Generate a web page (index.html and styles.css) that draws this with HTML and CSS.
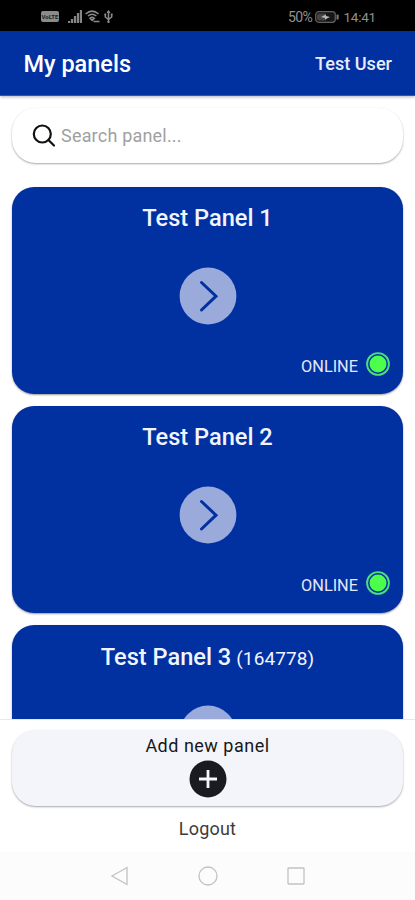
FILE: index.html
```html
<!DOCTYPE html>
<html lang="en">
<head>
<meta charset="utf-8">
<title>My panels</title>
<link rel="stylesheet" href="styles.css">
</head>
<body>
<div class="status">
  <div class="status-left">
    <span class="volte">VoLTE</span>
    <svg class="signal" width="14" height="13" viewBox="0 0 14 13"><path d="M1 13v-2M4 13V9M7 13V6M10 13V3M13 13V0" stroke="#858585" stroke-width="2.300"/></svg>
    <svg class="wifi" width="15" height="13" viewBox="0 0 15 13" fill="none" stroke="#8b8b8b" stroke-width="1.500"><path d="M.6 4Q7-1.800 13.600 4M3 6Q7 2.600 11.400 6M5 8.300Q7 6.500 9.300 8.300L7.200 10.500zM8.500 11.500h6"/></svg>
    <svg class="usb" width="9" height="13" viewBox="0 0 9 13" fill="none" stroke="#8b8b8b" stroke-width="1.500"><path d="M4.500 1v11M1.300 4v3l3.200 2.500L7.700 7V4"/><path d="M4.500 0 2.500 3h4zM3.500 11h2v2h-2zM.5 3.500h1.700v1.700H.5zM6.800 3.500h1.700v1.700H6.800z" fill="#8b8b8b" stroke="none"/></svg>
  </div>
  <div class="status-right">
    <span class="percent">50%</span>
    <svg class="battery" width="24" height="12" viewBox="0 0 24 12"><rect x=".7" y=".7" width="19.600" height="10.600" rx="3" fill="#161616" stroke="#626262" stroke-width="1.200"/><path d="M4 2.500h7v7H4a2 2 0 0 1-2-2v-3a2 2 0 0 1 2-2z" fill="#444"/><path d="M6 6l5-2.500V5l4 1-5 2.500V7z" fill="#bbb"/><path d="M21.500 3.500h1.200a1 1 0 0 1 1 1v3a1 1 0 0 1-1 1h-1.200z" fill="#777"/></svg>
    <span class="clock">14:41</span>
  </div>
</div>
<header class="header">
  <h1 class="title">My panels</h1>
  <span class="user">Test User</span>
</header>
<main class="content">
  <div class="search">
    <svg width="24" height="24" viewBox="0 0 24 24" fill="none" stroke="#111" stroke-width="2.200" stroke-linecap="round"><circle cx="10.300" cy="10" r="8.500"/><path d="M16.500 16l5.500 5.500"/></svg>
    <span class="placeholder">Search panel...</span>
  </div>
  <section class="panel">
    <h2 class="name">Test Panel 1</h2>
    <svg class="go" width="58" height="58" viewBox="0 0 58 58"><circle cx="29" cy="29" r="28.400" fill="#99aadb"/><path d="M22.500 15.500L37 29.200 22.500 43" fill="none" stroke="#0130a0" stroke-width="3" stroke-linecap="round"/></svg>
    <div class="state"><span>ONLINE</span><svg width="24" height="24" viewBox="0 0 24 24"><circle cx="12" cy="12" r="8.500" fill="#4dff4d"/><circle cx="12" cy="12" r="10.900" fill="none" stroke="#4ce07a" stroke-width="1.900"/></svg></div>
  </section>
  <section class="panel">
    <h2 class="name">Test Panel 2</h2>
    <svg class="go" width="58" height="58" viewBox="0 0 58 58"><circle cx="29" cy="29" r="28.400" fill="#99aadb"/><path d="M22.500 15.500L37 29.200 22.500 43" fill="none" stroke="#0130a0" stroke-width="3" stroke-linecap="round"/></svg>
    <div class="state"><span>ONLINE</span><svg width="24" height="24" viewBox="0 0 24 24"><circle cx="12" cy="12" r="8.500" fill="#4dff4d"/><circle cx="12" cy="12" r="10.900" fill="none" stroke="#4ce07a" stroke-width="1.900"/></svg></div>
  </section>
  <section class="panel">
    <h2 class="name">Test Panel 3<span class="code">(164778)</span></h2>
    <svg class="go" width="58" height="58" viewBox="0 0 58 58"><circle cx="29" cy="29" r="28.400" fill="#99aadb"/></svg>
  </section>
</main>
<footer class="footer">
  <div class="add">
    <span class="add-label">Add new panel</span>
    <svg width="38" height="38" viewBox="0 0 38 38"><circle cx="19" cy="19" r="18.500" fill="#191b20"/><path d="M10 19h18M19 10v18" stroke="#f4f6fa" stroke-width="2.800"/></svg>
  </div>
  <span class="logout">Logout</span>
</footer>
<nav class="nav">
  <svg width="18" height="20" viewBox="0 0 18 20"><path d="M1 10 16 1.500v17z"/></svg>
  <svg width="20" height="20" viewBox="0 0 20 20"><circle cx="10" cy="10" r="9"/></svg>
  <svg width="18" height="18" viewBox="0 0 18 18"><rect x="1" y="1" width="16" height="16" rx=".5"/></svg>
</nav>
</body>
</html>
```
FILE: styles.css
```css
* { box-sizing: border-box; }
body {
  margin: 0;
  width: 415px;
  height: 900px;
  overflow: hidden;
  display: flex;
  flex-direction: column;
  background: #fff;
  font-family: Roboto, "Liberation Sans", sans-serif;
}
svg { display: block; flex: none; }
.status {
  height: 31px;
  flex: none;
  background: #000;
  color: #909090;
  display: flex;
  justify-content: space-between;
  align-items: center;
  padding: 2px 39px 0 41px;
}
.status-left, .status-right { display: flex; align-items: center; }
.volte {
  width: 18px;
  height: 11px;
  border-radius: 2px;
  background: #8b8b8b;
  color: #222;
  font-size: 6px;
  font-weight: 700;
  line-height: 11px;
  text-align: center;
}
.signal { margin-left: 9px; }
.wifi { margin-left: 3px; }
.usb { margin-left: 4px; }
.percent { font-size: 14px; letter-spacing: -0.5px; }
.battery { margin: 0 4px 0 3px; }
.clock { font-size: 13.5px; letter-spacing: -0.2px; }
.header {
  height: 65px;
  flex: none;
  background: #0130a0;
  border-bottom: 1px solid #3a50b8;
  box-shadow: 0 1px 3px rgba(0, 0, 40, .3);
  color: #fff;
  display: flex;
  align-items: center;
  justify-content: space-between;
  padding: 1px 23px 0 23.5px;
}
.title { margin: 0; font-size: 23.500px; font-weight: 500; line-height: 28px; }
.user { font-size: 18.100px; font-weight: 500; color: #e8ecfb; }
.content {
  height: 623px;
  flex: none;
  overflow: hidden;
  padding: 12px 12px 0;
}
.search {
  height: 55px;
  margin-bottom: 23.500px;
  border-radius: 24px;
  background: #fff;
  box-shadow: 0 1px 2px rgba(0, 0, 0, .35);
  display: flex;
  align-items: center;
  padding-left: 20px;
}
.placeholder { margin-left: 5px; font-size: 18px; letter-spacing: 0.2px; color: #a0a0a0; }
.panel {
  height: 207px;
  margin-bottom: 12.200px;
  border-radius: 22px;
  background: #0130a0;
  box-shadow: 0 1px 2px rgba(0, 0, 0, .4);
  color: #f2f4ff;
  display: flex;
  flex-direction: column;
  align-items: center;
  padding: 17.700px 13px 0;
}
.name { margin: 0; height: 28px; font-size: 23.600px; font-weight: 500; line-height: 28px; white-space: nowrap; }
.code { margin-left: 5px; font-size: 19px; font-weight: 400; line-height: 1; letter-spacing: 0.1px; }
.go { margin-top: 34.500px; }
.state {
  align-self: flex-end;
  margin-top: 27px;
  display: flex;
  align-items: center;
  gap: 8px;
  font-size: 16.300px;
  color: #e3e8fb;
}
.state span { padding-top: 5px; }
.footer {
  height: 133px;
  flex: none;
  border-top: 1px solid #e8e8e8;
  padding: 10px 12px 0;
  display: flex;
  flex-direction: column;
  align-items: center;
}
.add {
  width: 100%;
  height: 76px;
  border-radius: 24px;
  background: #f3f5fa;
  box-shadow: 0 1px 2px rgba(0, 0, 0, .35);
  display: flex;
  flex-direction: column;
  align-items: center;
  padding-top: 5px;
  color: #17181b;
}
.add-label { font-size: 18px; line-height: 22px; margin-bottom: 3px; letter-spacing: 0.5px; }
.logout { margin-top: 12px; font-size: 18px; line-height: 22px; letter-spacing: 0.2px; color: #3c3c3c; }
.nav {
  height: 48px;
  flex: none;
  background: #fcfcfc;
  display: flex;
  align-items: center;
  justify-content: center;
  gap: 69px;
}
.nav svg { fill: none; stroke: #c2c2c2; stroke-width: 1.300; }
```
